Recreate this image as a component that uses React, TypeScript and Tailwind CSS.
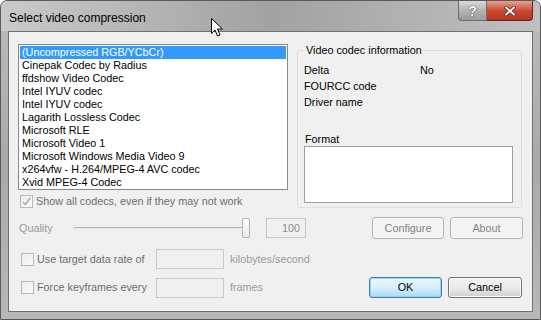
import React from 'react';

const codecs = [
  '(Uncompressed RGB/YCbCr)',
  'Cinepak Codec by Radius',
  'ffdshow Video Codec',
  'Intel IYUV codec',
  'Intel IYUV codec',
  'Lagarith Lossless Codec',
  'Microsoft RLE',
  'Microsoft Video 1',
  'Microsoft Windows Media Video 9',
  'x264vfw - H.264/MPEG-4 AVC codec',
  'Xvid MPEG-4 Codec',
];

const Check: React.FC<{ checked?: boolean }> = ({ checked }) => (
  <div className="w-[13px] h-[13px] border border-[#b9b9b9] bg-gradient-to-br from-[#ececec] to-[#fafafa] flex items-center justify-center shrink-0">
    {checked && (
      <svg width="9" height="9" viewBox="0 0 9 9">
        <path d="M1 5 L3.5 7.5 L8 1" stroke="#a7a7a7" strokeWidth="1.4" fill="none" />
      </svg>
    )}
  </div>
);

const Edit: React.FC<{ w: string; children?: React.ReactNode }> = ({ w, children }) => (
  <div className={`${w} h-[20px] border border-[#c9c9c9] bg-[#f0f0f0] flex items-center justify-end pr-[5px] text-[#8d8d8d]`}>
    {children}
  </div>
);

const App: React.FC = () => {
  return (
    <div
      className="relative w-[541px] h-[320px] overflow-hidden rounded-t-[7px] border border-[#5a5a5a] bg-gradient-to-b from-[#bdbdbd] via-[#a9a9a9] to-[#b8b8b8] flex flex-col text-[10.8px] text-black"
      style={{ fontFamily: '"Liberation Sans", Arial, sans-serif' }}
    >
      {/* title bar */}
      <div className="h-[30px] flex items-start shrink-0 bg-gradient-to-r from-[#cacaca] via-[#a2a2a2] to-[#c0c0c0]">
        <div className="pl-[8px] pt-[8px] text-[12px] text-black">
          Select video compression
        </div>
        <div className="ml-auto mr-[7px] flex">
          <div className="w-[29px] h-[20px] border border-[#6c6c6c] border-t-0 rounded-bl-[4px] bg-gradient-to-b from-[#dadada] via-[#b4b4b4] to-[#9c9c9c] flex items-center justify-center">
            <span className="text-white font-bold text-[14px] leading-none" style={{ textShadow: '0 0 1px #333, 0 0 1px #333' }}>?</span>
          </div>
          <div className="w-[46px] h-[20px] border border-[#5a2a24] border-t-0 border-l-0 rounded-br-[4px] bg-gradient-to-b from-[#e7a193] via-[#cc4a33] to-[#b53422] flex items-center justify-center">
            <svg width="12" height="10" viewBox="0 0 12 10">
              <path d="M2 1.5 L10 8.5 M10 1.5 L2 8.5" stroke="#5a2a24" strokeWidth="3.4" strokeLinecap="square" />
              <path d="M2 1.5 L10 8.5 M10 1.5 L2 8.5" stroke="#ffffff" strokeWidth="1.8" strokeLinecap="square" />
            </svg>
          </div>
        </div>
      </div>

      {/* client area */}
      <div className="mx-[7px] h-[281px] border border-[#707070] bg-[#f0f0f0] flex flex-col">
        <div className="flex pl-[9px] pt-[12px]">
          <div className="flex flex-col">
            <div className="w-[270px] h-[146px] border border-[#828790] bg-white p-[1px]">
              {codecs.map((c, i) => (
                <div
                  key={i}
                  className={`h-[13px] leading-[13px] pl-[2px] whitespace-nowrap ${i === 0 ? 'bg-[#3399ff] text-white' : ''}`}
                >
                  {c}
                </div>
              ))}
            </div>
            <div className="flex items-center gap-[3px] mt-[5px] ml-[2px] h-[13px] text-[#6d6d6d]">
              <Check checked />
              <span>Show all codecs, even if they may not work</span>
            </div>
          </div>

          <div className="relative ml-[9px] mt-[6px] w-[225px] h-[158px] border border-[#d5dfe5] rounded-[3px] pl-[6px] pr-[8px]">
            <div className="absolute -top-[8px] left-[6px] bg-[#f0f0f0] px-[2px] leading-[14px]">Video codec information</div>
            <div className="pt-[11px] flex flex-col">
              <div className="h-[16px] leading-[16px] flex">
                <span className="w-[116px]">Delta</span>
                <span>No</span>
              </div>
              <div className="h-[16px] leading-[16px]">FOURCC code</div>
              <div className="h-[16px] leading-[16px]">Driver name</div>
              <div className="mt-[22px] h-[14px] leading-[14px] pl-[1px]">Format</div>
              <div className="h-[57px] border border-[#a0a0a0] bg-white" />
            </div>
          </div>
        </div>

        {/* quality row */}
        <div className="flex items-center mt-[9px] h-[22px] pl-[10px] text-[#9a9a9a]">
          <span className="w-[55px]">Quality</span>
          <div className="relative w-[178px] h-[22px] flex items-center">
            <div className="w-[172px] h-[2px] border-t border-[#b5b5b5] bg-[#e6e6e6]" />
            <div className="absolute right-[2px] top-[1px] w-[8px] h-[20px] border border-[#b4b4b4] rounded-[2px] bg-gradient-to-b from-[#fdfdfd] to-[#e9e9e9]" />
          </div>
          <div className="ml-[14px]">
            <Edit w="w-[40px]">100</Edit>
          </div>
          <div className="ml-[66px] w-[72px] h-[22px] border border-[#b6b6b6] rounded-[3px] bg-[#f4f4f4] flex items-center justify-center text-[#838383]">
            Configure
          </div>
          <div className="ml-[6px] w-[73px] h-[22px] border border-[#b6b6b6] rounded-[3px] bg-[#f4f4f4] flex items-center justify-center text-[#838383]">
            About
          </div>
        </div>

        {/* target data rate row */}
        <div className="flex items-center mt-[10px] h-[20px] pl-[12px]">
          <Check />
          <span className="ml-[3px] w-[119px] text-[#6d6d6d]">Use target data rate of</span>
          <Edit w="w-[68px]" />
          <span className="ml-[6px] text-[#9a9a9a]">kilobytes/second</span>
        </div>

        {/* keyframes row */}
        <div className="flex items-center mt-[8px] h-[21px] pl-[12px]">
          <Check />
          <span className="ml-[3px] w-[119px] text-[#6d6d6d]">Force keyframes every</span>
          <Edit w="w-[68px]" />
          <span className="ml-[6px] text-[#9a9a9a]">frames</span>
          <div className="ml-auto flex gap-[6px] mr-[10px]">
            <div className="w-[73px] h-[21px] border border-[#3c7fb1] rounded-[3px] bg-gradient-to-b from-[#eaf6fd] via-[#d9f0fc] to-[#a7d9f5] shadow-[inset_0_0_0_1px_#97d4ef] flex items-center justify-center">
              OK
            </div>
            <div className="w-[74px] h-[21px] border border-[#707070] rounded-[3px] bg-gradient-to-b from-[#f2f2f2] via-[#ebebeb] to-[#cfcfcf] shadow-[inset_0_0_0_1px_#fcfcfc] flex items-center justify-center">
              Cancel
            </div>
          </div>
        </div>
      </div>

      {/* mouse pointer */}
      <svg className="absolute left-[210px] top-[17px]" width="13" height="20" viewBox="0 0 13 20">
        <path d="M0.5 0.5 L0.5 15.5 L4 12 L6.5 18 L9 17 L6.5 11 L11.5 11 Z" fill="#fff" stroke="#000" strokeWidth="1" />
      </svg>
    </div>
  );
};

export default App;
